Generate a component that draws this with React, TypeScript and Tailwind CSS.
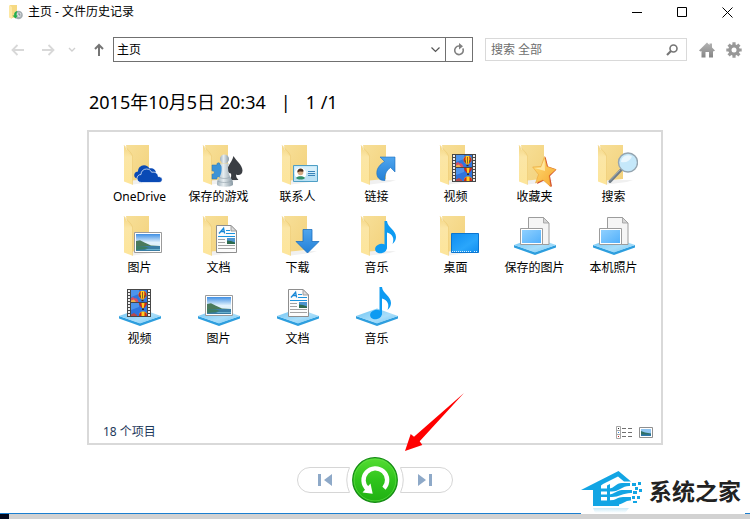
import React from "react";

function Gradients() {
  return (
    <svg className="absolute h-0 w-0" aria-hidden="true">
      <defs>
        <linearGradient id="folderBack" x1="0" y1="0" x2="1" y2="1">
          <stop offset="0" stopColor="#f7df98" />
          <stop offset="1" stopColor="#f3d27c" />
        </linearGradient>
        <linearGradient id="folderFlap" x1="0" y1="0" x2="0" y2="1">
          <stop offset="0" stopColor="#f3d583" />
          <stop offset="0.3" stopColor="#fbe6a6" />
          <stop offset="1" stopColor="#fde59a" />
        </linearGradient>
        <linearGradient id="baseTop" x1="0" y1="0" x2="1" y2="1">
          <stop offset="0" stopColor="#6cc4f4" />
          <stop offset="0.6" stopColor="#a9defa" />
          <stop offset="1" stopColor="#72c6f3" />
        </linearGradient>
        <linearGradient id="sky" x1="0" y1="0" x2="0" y2="1">
          <stop offset="0" stopColor="#3f8fe4" />
          <stop offset="0.5" stopColor="#e2f2fd" />
          <stop offset="1" stopColor="#d5ecf7" />
        </linearGradient>
        <linearGradient id="screen" x1="0" y1="0" x2="1" y2="1">
          <stop offset="0" stopColor="#0f8df0" />
          <stop offset="0.6" stopColor="#2aa6fb" />
          <stop offset="1" stopColor="#108ef0" />
        </linearGradient>
        <linearGradient id="photo" x1="0" y1="0" x2="1" y2="1">
          <stop offset="0" stopColor="#8fd0ff" />
          <stop offset="1" stopColor="#52b0fb" />
        </linearGradient>
        <linearGradient id="arrowBlue" x1="0" y1="0" x2="0" y2="1">
          <stop offset="0" stopColor="#4ea5ee" />
          <stop offset="1" stopColor="#2480d6" />
        </linearGradient>
        <linearGradient id="pawn" x1="0" y1="0" x2="1" y2="0">
          <stop offset="0" stopColor="#9fb0ba" />
          <stop offset="0.4" stopColor="#e6edf0" />
          <stop offset="1" stopColor="#8798a3" />
        </linearGradient>
        <linearGradient id="star" x1="0" y1="0" x2="1" y2="1">
          <stop offset="0" stopColor="#ffe27c" />
          <stop offset="1" stopColor="#f6a52c" />
        </linearGradient>
        <linearGradient id="green" x1="0" y1="0" x2="0" y2="1">
          <stop offset="0" stopColor="#55dd33" />
          <stop offset="0.5" stopColor="#2fc41c" />
          <stop offset="1" stopColor="#1fb012" />
        </linearGradient>
        <linearGradient id="metal" x1="0" y1="0" x2="0" y2="1">
          <stop offset="0" stopColor="#b4b4b4" />
          <stop offset="1" stopColor="#858585" />
        </linearGradient>
        <linearGradient id="fade" x1="0" y1="0" x2="0" y2="1">
          <stop offset="0" stopColor="#a6dcf2" />
          <stop offset="1" stopColor="#ffffff" />
        </linearGradient>
      </defs>
    </svg>
  );
}

function Folder() {
  return (
    <g>
      <path d="M17 42.500L37 40l6-2H16z" fill="#000" opacity="0.06" />
      <path d="M10 3H33V37L16 38.500z" fill="url(#folderBack)" />
      <path d="M8 3.300L13.500 12 16.500 14V42.700L8 39.500z" fill="url(#folderFlap)" />
      <path d="M8 3.300L15 11 16.500 14V42.700" fill="none" stroke="#ecca72" strokeWidth="0.600" />
    </g>
  );
}

function Base() {
  return (
    <g>
      <path d="M3 32L24 39 45 32V34.500L24 42 3 34.500z" fill="#2e9ede" />
      <path d="M3 32L24 24.500 45 32 24 39.500z" fill="url(#baseTop)" />
    </g>
  );
}

/* Hot-air balloon, 8 x 10. */
function Balloon() {
  return (
    <g>
      <path d="M0 3.800a4 4 0 1 1 8 0C8 6.200 5.800 7 5 8.600H3C2.200 7 0 6.200 0 3.800z" fill="#ffce1f" />
      <path d="M0 3.800C0.500 1.500 1.500 0.500 2.500 0.200 1.800 2.500 2 5 3 8 1.500 6.500 0 6 0 3.800zM8 3.800C7.500 1.500 6.500 0.500 5.500 0.200 6.200 2.500 6 5 5 8 6.500 6.500 8 6 8 3.800z" fill="#c9281d" />
      <path d="M1 4.500h1.500v2zM7 4.500H5.500v2z" fill="#1d7a35" />
      <path d="M3.600 1h0.800v6.500h-0.800z" fill="#7b3b1c" />
      <path d="M3 8.800h2v1.400h-2z" fill="#3b2714" />
    </g>
  );
}

/* Film strip, 24 x 28. */
function Film() {
  const holes = [1, 4, 7, 10, 13, 16, 19, 22, 25];
  return (
    <g>
      <path d="M0 0H24V28H0z" fill="#474747" />
      {holes.map((y) => (
        <g key={y} fill="#efefef">
          <path d={`M1 ${y}h2v2h-2z`} />
          <path d={`M21 ${y}h2v2h-2z`} />
        </g>
      ))}
      <path d="M4 1H20V13H4zM4 14H20V27H4z" fill="#2f74dd" />
      <path d="M4 1H12V5L4 8zM4 14H12V18L4 21z" fill="#4d94ec" />
      <path d="M4 9.500C5 7.500 7 8 7.500 9.500 9 8.500 11 9.500 11.500 13H4z" fill="#d94f63" />
      <path d="M4 11.500l3-1 2 2.500H4z" fill="#f0b04a" />
      <g transform="translate(11.500 2)"><Balloon /></g>
      <path d="M12 14H20C20 16.500 18 17.500 17.200 19H14.800C14 17.500 12 16.500 12 14z" fill="#c9281d" />
      <path d="M14.500 14h3l-0.700 5h-1.600z" fill="#ffce1f" />
      <path d="M15 19.500h2v1.500h-2z" fill="#3b2714" />
      <path d="M12 27c0-3.500 1.500-4.500 4-4.500s4 1 4 4.500z" fill="#ffce1f" />
      <path d="M12 27c0-2.500 1-3.500 2.500-4v4zM20 27c0-2.500-1-3.500-2.500-4v4z" fill="#c9281d" />
      <path d="M4 25.500l3-1.500 3 2v1H4z" fill="#b84a4a" />
    </g>
  );
}

/* Framed landscape, 28 x 21. */
function Landscape() {
  return (
    <g>
      <path d="M0.500 0.500H27.500V20.500H0.500z" fill="#fff" stroke="#9b9b9b" />
      <path d="M2 2H26V19H2z" fill="url(#sky)" />
      <path d="M2 9l4-0.800 5 2.500 6 2.800 9 0.500V15H2z" fill="#4a7a5c" />
      <path d="M2 14H26V19H2z" fill="#3a7ea5" />
      <path d="M2 14l9 0.500 4 1.500-5 1.200L2 18z" fill="#3d7d62" />
      <path d="M13 17h13v1H11z" fill="#6bb1cf" />
    </g>
  );
}

/* Text document, 21 x 28. */
function Doc() {
  return (
    <g>
      <path d="M0.500 0.500H15L20.500 6V27.500H0.500z" fill="#fcfcfc" stroke="#8e8e8e" />
      <path d="M15 0.500V6H20.500z" fill="#dcdcdc" stroke="#8e8e8e" strokeWidth="0.800" />
      <path d="M3 8.500L7.600 3.200 8.600 8.500M5 6.500H8.300" fill="none" stroke="#1787d6" strokeWidth="1.300" />
      <path d="M10 5.500H14M10 8.500H19M2 11.500H19" stroke="#1b93dd" strokeWidth="1.100" />
      <path d="M2 14.500H9M2 17.500H9M2 20.500H19M2 23.500H19" stroke="#a2a2a2" />
      <path d="M11 13H19V19H11z" fill="#4d94cf" />
      <path d="M11 15.500l4 0.500 4 1.500V19H11z" fill="#2d6a4d" />
    </g>
  );
}

/* Eighth note, 21 x 33. */
function Note() {
  return (
    <g fill="#0d9bf2">
      <ellipse cx="6" cy="27.500" rx="6" ry="4.700" transform="rotate(-14 6 27.500)" />
      <path d="M9.500 0H12C12.500 6.500 21 9 21 16c0 3-1.500 5-3.500 7 2-5.500 0.500-9.500-5.500-11.500V27.500H9.500z" />
    </g>
  );
}

function PhotoStack() {
  return (
    <g>
      <Base />
      <path d="M17.500 4.500H32.500L38 10V31.500H17.500z" fill="#f5f5f5" stroke="#9c9c9c" />
      <path d="M32.500 4.500V10H38z" fill="#d5d5d5" stroke="#9c9c9c" strokeWidth="0.800" />
      <path d="M9.500 15.500H31.500V31.500H9.500z" fill="#fff" stroke="#9c9c9c" />
      <path d="M11 17H30V30H11z" fill="url(#photo)" />
    </g>
  );
}

const art: Record<string, React.ReactNode> = {
  onedrive: (
    <g>
      <Folder />
      <path d="M22 36.500c-3 0-4-2-3.700-4 0.300-2 2-3 3.700-3 0-3.500 2.500-6 6-6.200 2.500 0 4.500 1.300 5.500 3.200 3-1 6 0.700 6.500 4l-8 6z" fill="#0a4ab5" />
      <path d="M25.500 40.500c-2.700 0-4.500-1.700-4.500-4s1.700-4 4-4c0-3.200 2.300-5.500 5.500-5.500 2.500 0 4.300 1.300 5.200 3.300 3.300-0.800 6.300 1 6.500 4.200 2.300 0 4 1.200 4 3.100 0 1.900-1.400 2.900-3.200 2.900z" fill="#0a4ab5" stroke="#fff" strokeWidth="0.700" />
    </g>
  ),
  games: (
    <g>
      <Folder />
      <path d="M17 23h5c-1-3 4-3 3 0h5v5c3-1 3 4 0 3.500V37h-5c1-3-4-3-3 0h-5v-5c3 1 3-4 0-3z" fill="#3d93d6" stroke="#2874b3" strokeWidth="0.500" />
      <path d="M38.500 14C40.500 18 47.500 23 47.500 28.500 47.500 32.500 44 34 41 32.500 41 35 42 36.500 43.500 38H35C36 36 36.500 34 36 31.500 32 31 32 27 33.500 24 35.500 20.500 37.500 18 38.500 14z" fill="#3a3e43" />
      <circle cx="29.500" cy="17" r="4.500" fill="url(#pawn)" />
      <path d="M25 21.500h9l-1 3c0 6 1.500 9 3.500 12.500 1.500 1.500 1.500 3 1.500 5.500 0 3-16 3-16 0 0-2.500 0-4 1.500-5.500 2-3.500 3.500-6.500 3-12.500z" fill="url(#pawn)" />
      <path d="M22.500 39c4 2 10 2 14.500 0M24.500 35.500c3 1.300 7 1.300 10 0" fill="none" stroke="#8e9ea8" strokeWidth="0.600" />
    </g>
  ),
  contacts: (
    <g>
      <Folder />
      <path d="M19.500 23.500H43.500V39.500H19.500z" fill="#b9e1f5" stroke="#4f9fc5" />
      <path d="M20.500 24.500H42.500V31H20.500z" fill="#d8f0fb" />
      <circle cx="26.500" cy="31.500" r="5.800" fill="#fff" />
      <path d="M22 36c1-2.500 8-2.500 9 0-2 2-7 2-9 0z" fill="#2f8f68" />
      <circle cx="26.500" cy="30.500" r="2.800" fill="#d6ab83" />
      <path d="M23.300 30.500c-0.500-5 6.500-5 6.300-1-2 0.500-4-0.500-4.500 0.200z" fill="#4a3120" />
      <path d="M34 29.500H41M34 31.500H41M34 33.500H41" stroke="#3a83b8" />
    </g>
  ),
  link: (
    <g>
      <Folder />
      <path d="M27 15H42V30L37.500 25.500C33.500 28.500 31.500 32 32 38.500 26.500 39 23.500 35 23.800 30.500 24 26 27 22.500 31.500 19.500z" fill="url(#arrowBlue)" stroke="#1c70c0" strokeWidth="0.600" />
    </g>
  ),
  video: (
    <g>
      <Folder />
      <g transform="translate(20 12)"><Film /></g>
    </g>
  ),
  favorites: (
    <g>
      <Folder />
      <path d="M34.500 14.500L37 24.500 45.500 27.500 39 34 41 44.500 39 44.500 34 38 26 42z" fill="#d0452b" />
      <path d="M33.500 14.500L36 24.500 45 27.500 38 33.500 39.500 44.500 32 38 24.500 41 27.500 32.500 21.700 25 30 24.500z" fill="url(#star)" stroke="#e69a30" strokeWidth="0.500" />
      <path d="M33.500 17L34 29 23.500 26 30 25.500z" fill="#ffeeb0" opacity="0.800" />
    </g>
  ),
  search: (
    <g>
      <Folder />
      <path d="M31 28L20 39.500" stroke="#6f7b85" strokeWidth="3" strokeLinecap="round" />
      <path d="M30 28L20 38.500" stroke="#a9b4bb" strokeWidth="0.900" />
      <circle cx="38" cy="20.500" r="9.500" fill="#c5e8fa" stroke="#95a5b0" strokeWidth="1.400" />
      <path d="M31 20a7 7 0 0 1 11-5.500C40 19 36 21 31 20z" fill="#eaf7fe" />
    </g>
  ),
  pictures: (
    <g>
      <Folder />
      <g transform="translate(18 19)"><Landscape /></g>
    </g>
  ),
  documents: (
    <g>
      <Folder />
      <g transform="translate(21 12)"><Doc /></g>
    </g>
  ),
  downloads: (
    <g>
      <Folder />
      <path d="M29 16.500H38V28.500H45L33.500 40 22 28.500H29z" fill="url(#arrowBlue)" stroke="#1c70c0" strokeWidth="0.800" />
    </g>
  ),
  music: (
    <g>
      <Folder />
      <g transform="translate(22 8)"><Note /></g>
    </g>
  ),
  desktop: (
    <g>
      <Folder />
      <path d="M19.500 20.500H46.500V39.500H19.500z" fill="url(#screen)" stroke="#0a75d0" />
      <path d="M20 38.500H40M42 38.500H46" stroke="#d6efff" strokeDasharray="1 1" />
    </g>
  ),
  photos: <PhotoStack />,
  libVideo: (
    <g>
      <Base />
      <g transform="translate(11 5)"><Film /></g>
    </g>
  ),
  libPictures: (
    <g>
      <Base />
      <g transform="translate(10 11)"><Landscape /></g>
    </g>
  ),
  libDocuments: (
    <g>
      <Base />
      <g transform="translate(14 5)"><Doc /></g>
    </g>
  ),
  libMusic: (
    <g>
      <Base />
      <g transform="translate(17 3)"><Note /></g>
    </g>
  ),
};

const items = [
  { icon: "onedrive", label: "OneDrive" },
  { icon: "games", label: "保存的游戏" },
  { icon: "contacts", label: "联系人" },
  { icon: "link", label: "链接" },
  { icon: "video", label: "视频" },
  { icon: "favorites", label: "收藏夹" },
  { icon: "search", label: "搜索" },
  { icon: "pictures", label: "图片" },
  { icon: "documents", label: "文档" },
  { icon: "downloads", label: "下载" },
  { icon: "music", label: "音乐" },
  { icon: "desktop", label: "桌面" },
  { icon: "photos", label: "保存的图片" },
  { icon: "photos", label: "本机照片" },
  { icon: "libVideo", label: "视频" },
  { icon: "libPictures", label: "图片" },
  { icon: "libDocuments", label: "文档" },
  { icon: "libMusic", label: "音乐" },
];

function TitleBar() {
  return (
    <header className="flex h-6 items-center">
      <div className="flex flex-1 items-center gap-1 pl-2">
        <svg width="16" height="16" viewBox="0 0 16 16" aria-hidden="true">
          <path d="M2 1H9V13L4 14z" fill="#f6d982" />
          <path d="M1 1L4 3V15L1 13.500z" fill="#fde8a4" />
          <circle cx="10.500" cy="11" r="4.300" fill="#a5adb2" />
          <circle cx="11" cy="10.800" r="2.300" fill="#d9dee0" />
          <path d="M11 9v2h1.500" fill="none" stroke="#6b7479" strokeWidth="0.800" />
          <path d="M9.500 7C6.500 7.500 6 9.500 6.300 11.500H4.500L7.500 14.500 9.800 11.500H8.500C8.300 9.500 8.800 8.500 9.500 7z" fill="#21b04b" />
        </svg>
        <h1 className="text-xs">主页 - 文件历史记录</h1>
      </div>
      <button className="flex h-6 w-[45px] items-center justify-center" aria-label="最小化">
        <svg width="11" height="11" viewBox="0 0 11 11"><path d="M0 5.500H10" stroke="#000" /></svg>
      </button>
      <button className="flex h-6 w-[45px] items-center justify-center" aria-label="最大化">
        <svg width="11" height="11" viewBox="0 0 11 11"><path d="M0.500 0.500H9.500V9.500H0.500z" fill="none" stroke="#000" /></svg>
      </button>
      <button className="flex h-6 w-[45px] items-center justify-center" aria-label="关闭">
        <svg width="11" height="11" viewBox="0 0 11 11"><path d="M0.500 0.500L10.500 10.500M10.500 0.500L0.500 10.500" stroke="#000" /></svg>
      </button>
    </header>
  );
}

function Toolbar() {
  return (
    <nav className="mt-[13px] flex h-[25px] items-center pr-2 pl-1">
      <button className="flex w-7 justify-center" aria-label="后退" disabled>
        <svg width="14" height="12" viewBox="0 0 14 12" fill="none" stroke="#d8d8d8" strokeWidth="1.800">
          <path d="M13 6H2M6.500 1L1.500 6 6.500 11" />
        </svg>
      </button>
      <button className="flex w-8 justify-center" aria-label="前进" disabled>
        <svg width="14" height="12" viewBox="0 0 14 12" fill="none" stroke="#d8d8d8" strokeWidth="1.800">
          <path d="M1 6H12M7.500 1L12.500 6 7.500 11" />
        </svg>
      </button>
      <button className="flex w-4 justify-center" aria-label="最近浏览的位置" disabled>
        <svg width="8" height="6" viewBox="0 0 8 6" fill="none" stroke="#d0d0d0" strokeWidth="1.400">
          <path d="M1 1L4 4 7 1" />
        </svg>
      </button>
      <button className="ml-1 flex w-[29px] justify-center" aria-label="上移">
        <svg width="10" height="13" viewBox="0 0 10 13" fill="none" stroke="#757575" strokeWidth="2">
          <path d="M5 13V2M1 6L5 2 9 6" />
        </svg>
      </button>
      <div className="flex h-full min-w-0 flex-1 border border-[#707070]">
        <input className="min-w-0 flex-1 bg-white px-[3px] text-xs outline-none" aria-label="地址" defaultValue="主页" />
        <button className="flex w-5 items-center justify-center" aria-label="展开地址">
          <svg width="9" height="6" viewBox="0 0 9 6" fill="none" stroke="#555" strokeWidth="1.200">
            <path d="M0.500 0.500L4.500 4.500 8.500 0.500" />
          </svg>
        </button>
        <button className="flex w-[27px] items-center justify-center border-l border-[#707070]" aria-label="刷新">
          <svg width="12" height="13" viewBox="0 0 12 13" fill="none" stroke="#808080" strokeWidth="1.600">
            <path d="M6.500 3H5.800A4.300 4.300 0 1 0 9.800 5.300" />
            <path d="M6 0L10 3.200 6 6.400z" fill="#808080" stroke="none" />
          </svg>
        </button>
      </div>
      <form className="ml-3 flex h-[23px] w-[202px] items-center border border-[#d9d9d9]" onSubmit={(e) => e.preventDefault()}>
        <input className="min-w-0 flex-1 bg-white px-[5px] text-xs outline-none placeholder:text-[#6d6d6d] placeholder:opacity-100" aria-label="搜索" placeholder="搜索 全部" />
        <button className="flex w-7 justify-center" aria-label="开始搜索">
          <svg width="12" height="12" viewBox="0 0 12 12" fill="none" stroke="#757575">
            <circle cx="7.500" cy="4.500" r="3.500" strokeWidth="1.600" />
            <path d="M5 7L1 11" strokeWidth="2.200" />
          </svg>
        </button>
      </form>
      <button className="ml-3 w-4" aria-label="主页">
        <svg width="16" height="16" viewBox="0 0 16 16" fill="url(#metal)">
          <path d="M8 0.500L10.500 3V1.500H13V5.500L16 8.500 14.500 9.500 14 9V15.500H10V10H6.500V15.500H2.500V9L1.500 9.500 0 8.500z" />
        </svg>
      </button>
      <button className="ml-[11px] w-4" aria-label="设置">
        <svg width="16" height="16" viewBox="0 0 16 16" fill="none">
          <g stroke="#9b9b9b" strokeWidth="3.200">
            <path d="M8 0.300V15.700M0.300 8H15.700M2.600 2.600L13.400 13.400M13.400 2.600L2.600 13.400" />
          </g>
          <circle cx="8" cy="8" r="5.700" fill="#979797" />
          <circle cx="8" cy="8" r="2.500" fill="#fff" />
        </svg>
      </button>
    </nav>
  );
}

function FilesPanel() {
  return (
    <section className="mx-[87px] flex flex-1 flex-col border-2 border-[#d9d9d9]">
      <ul className="flex flex-1 flex-wrap content-start pt-[10px] pl-[11px]">
        {items.map((item, i) => (
          <li key={i} className="flex h-[71px] w-[79px] flex-col items-center">
            <svg width="48" height="48" viewBox="0 0 48 48" aria-hidden="true">
              {art[item.icon]}
            </svg>
            <span className="text-xs leading-[14px] whitespace-nowrap">{item.label}</span>
          </li>
        ))}
      </ul>
      <footer className="flex h-[22px] items-center pr-2 pl-[14px] text-xs text-[#1e395b]">
        <p className="flex-1">18 个项目</p>
        <button className="w-4" aria-label="详细信息">
          <svg width="16" height="13" viewBox="0 0 16 13" fill="none">
            <path d="M0.500 0.500H4.500V12.500H0.500zM0.500 4.500H4.500M0.500 8.500H4.500" stroke="#a6a6a6" />
            <path d="M6 2.500H10M12 2.500H16M6 6.500H10M12 6.500H16M6 10.500H10M12 10.500H16" stroke="#707070" />
            <path d="M2 2h1v1H2z" fill="#222" />
            <path d="M2 6h1v1H2z" fill="#3487e0" />
            <path d="M2 10h1v1H2z" fill="#c02020" />
          </svg>
        </button>
        <button className="ml-[7px] w-[14px]" aria-label="大图标">
          <svg width="14" height="11" viewBox="0 0 14 11">
            <path d="M0.500 0.500H13.500V10.500H0.500z" fill="#fff" stroke="#8f8f8f" />
            <path d="M2 2H12V9H2z" fill="#8fc4f0" />
            <path d="M2 4l4 1.500 6 1V9H2z" fill="#2f6f66" />
            <path d="M2 7.500H12V9H2z" fill="#2e78ad" />
          </svg>
        </button>
      </footer>
    </section>
  );
}

function Transport() {
  return (
    <div className="relative flex items-center justify-center gap-0.5 pt-3 pb-[10px]">
      <button aria-label="上一个版本">
        <svg width="53" height="26" viewBox="0 0 53 26">
          <path d="M52.500 0.500H13A12.500 12.500 0 0 0 13 25.500H52.500Q47 13 52.500 0.500z" fill="#fff" stroke="#d6d6d6" />
          <path d="M21 7H24V19H21zM35 7V19L27 13z" fill="#8ea9c8" />
        </svg>
      </button>
      <button className="rounded-full" aria-label="还原">
        <svg width="46" height="46" viewBox="0 0 46 46">
          <circle cx="23" cy="23" r="22.300" fill="url(#green)" stroke="#128a12" strokeWidth="1.200" />
          <circle cx="23" cy="23" r="20.900" fill="none" stroke="#69e04c" strokeWidth="0.800" opacity="0.700" />
          <path d="M32 31.200A11.800 11.800 0 1 0 15.500 32" fill="none" stroke="#fff" strokeWidth="4.400" />
          <path d="M18.500 26.500L20.700 36.700 10.500 35.500z" fill="#fff" />
        </svg>
      </button>
      <button aria-label="下一个版本">
        <svg width="53" height="26" viewBox="0 0 53 26">
          <path d="M0.500 0.500H40A12.500 12.500 0 0 1 40 25.500H0.500Q6 13 0.500 0.500z" fill="#fff" stroke="#d6d6d6" />
          <path d="M29 7H32V19H29zM18 7V19L26 13z" fill="#8ea9c8" />
        </svg>
      </button>
      <svg className="absolute -top-[53px] left-[calc(50%+29px)]" width="61" height="60" viewBox="0 0 61 60" aria-hidden="true">
        <path d="M60 1L15.700 49.300 18.300 53 1 59 6.700 42 10 44.700z" fill="#f00" />
      </svg>
    </div>
  );
}

function Watermark() {
  return (
    <div className="absolute right-[5px] bottom-[5px] flex h-[45px] w-[164px] items-start gap-1.5 bg-white pt-0.5">
      <svg className="shrink-0" width="62" height="43" viewBox="0 0 62 43" aria-hidden="true">
        <g fill="#12a5e4">
          <path d="M0 19L37.500 0 50 10.500H43L37 5.500 22 13 20 14.500V34H12V19z" />
          <path d="M12 29.500H38V35H12z" />
          <path d="M26 14.500L29 13V30H26z" />
          <path d="M20 17.500H28C33 17.500 35 12 41 12H49V15C42 14.500 38 20.500 31 20.500H20z" />
          <path d="M20 23.500H28C33 23.500 36 19 41 19H51V22C43 21.500 38 26 31 26H20z" />
          <path d="M29 29.500C34 29.500 37 26 42 26H50V29.500C45 29 42 33 36 34H29z" />
          <path d="M51 12h4v3h-4zM57 11h3v3h-3zM54 16h3v3h-3zM52 20h4v3h-4zM58 18h3v3h-3zM51 25h3v3h-3zM56 25h3v3h-3zM52 30h4v2h-4z" />
        </g>
        <path d="M12 37H48L44 42H14z" fill="url(#fade)" opacity="0.600" />
      </svg>
      <span className="mt-2 text-[23px] leading-6 font-bold whitespace-nowrap text-[#222]">系统之家</span>
    </div>
  );
}

export default function App() {
  return (
    <div className="relative flex min-h-screen flex-col bg-white font-['Noto_Sans','Noto_Sans_CJK_SC',sans-serif] text-black">
      <Gradients />
      <TitleBar />
      <Toolbar />
      <main className="flex flex-1 flex-col">
        <h2 className="mt-7 mb-4 ml-[89px] flex gap-[15px] text-lg leading-6">
          <span>2015年10月5日 20:34</span>
          <span>|</span>
          <span>1 /1</span>
        </h2>
        <FilesPanel />
        <Transport />
      </main>
      <div className="flex h-1.5 border-t border-[#1c7fd0] bg-[#d2d2d2]">
        <div className="w-[9px] bg-[#03081c]" />
      </div>
      <Watermark />
    </div>
  );
}
